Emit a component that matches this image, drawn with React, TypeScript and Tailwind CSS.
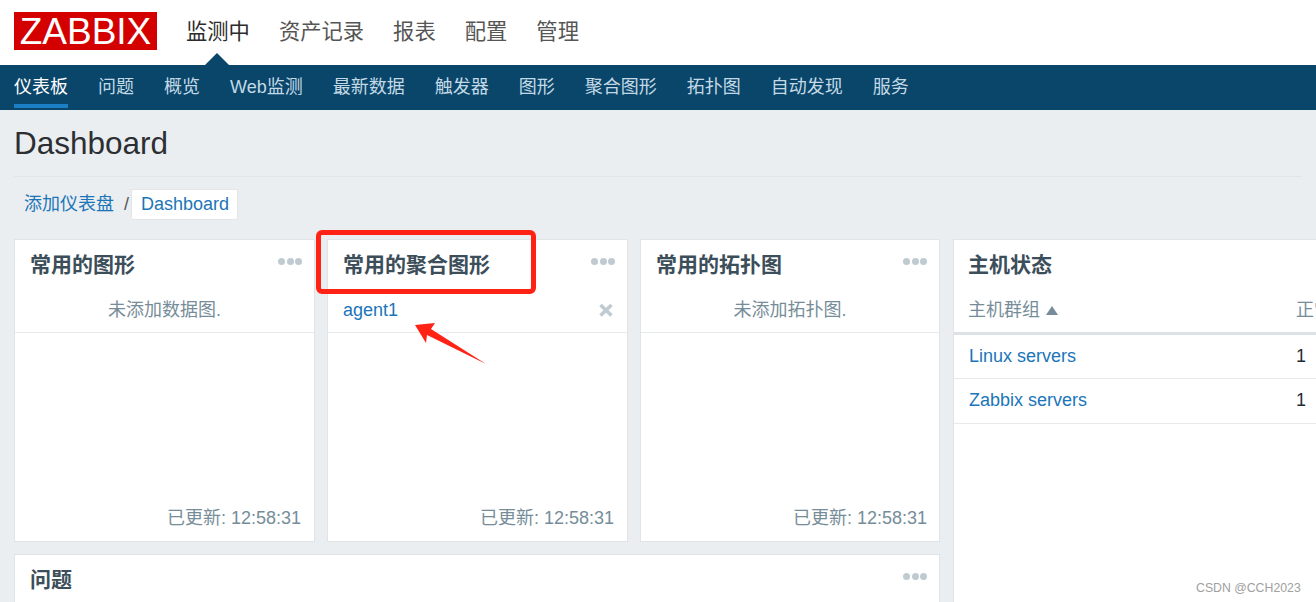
const FONT = "font-['Liberation_Sans','Noto_Sans_CJK_SC',sans-serif]";

function Dots() {
  return (
    <div className="flex gap-[1.5px] absolute right-[12px] top-[18px]">
      <span className="w-[7px] h-[7px] rounded-full bg-[#bfcbd1]" />
      <span className="w-[7px] h-[7px] rounded-full bg-[#bfcbd1]" />
      <span className="w-[7px] h-[7px] rounded-full bg-[#bfcbd1]" />
    </div>
  );
}

function Card({ title, children, narrow = false }: { title: string; children?: React.ReactNode; narrow?: boolean }) {
  return (
    <section className="relative bg-white border border-[#dfe4e7] flex flex-col h-[303px]">
      <h2 className="pl-[15px] pt-[10px] h-[49px] text-[21px] leading-[30px] font-bold text-[#3c4e5a]">{title}</h2>
      <Dots />
      <div className="flex-1">{children}</div>
      <div className={`text-right pb-[11px] text-[18px] leading-[24px] text-[#768d99] ${narrow ? "pr-[12px]" : "pr-[13px]"}`}>已更新: 12:58:31</div>
    </section>
  );
}

function EmptyRow({ text }: { text: string }) {
  return <div className="h-[44px] border-b border-[#e6eaec] text-center text-[18px] leading-[42px] text-[#768d99]">{text}</div>;
}

const mainNav = ["资产记录", "报表", "配置", "管理"];
const subNav = ["问题", "概览", "Web监测", "最新数据", "触发器", "图形", "聚合图形", "拓扑图", "自动发现", "服务"];

export default function App() {
  return (
    <div className={`relative w-[1316px] h-[602px] overflow-hidden bg-[#ebeef0] ${FONT}`}>
      <header className="h-[65px] bg-white flex pl-[14px] pt-[12px]">
        <div className="w-[143px] h-[38px] bg-[#d40000] text-white text-[37px] leading-[39px] text-center">ZABBIX</div>
        <nav className="flex gap-[29px] ml-[29px] text-[21.3px] leading-[41px] text-[#555]">
          <span className="relative text-[#2c2c2c] h-[41px]">
            监测中
            <span className="absolute left-[19px] top-[41px] w-0 h-0 border-x-[12px] border-x-transparent border-b-[12px] border-b-[#0a466a]" />
          </span>
          {mainNav.map((n) => <span key={n}>{n}</span>)}
        </nav>
      </header>

      <nav className="h-[45px] bg-[#0a466a] flex gap-[30px] pl-[14px] text-[18px] leading-[44px] text-[#c3dae6]">
        <span className="h-[43px] text-white border-b-[4px] border-[#1a7fc4]">仪表板</span>
        {subNav.map((n) => <span key={n}>{n}</span>)}
      </nav>

      <main className="px-[14px]">
        <h1 className="h-[67px] border-b border-[#e2e6e8] text-[31.5px] leading-[66px] text-[#2b2f33]">Dashboard</h1>
        <div className="flex items-center mt-[12px] h-[30px] text-[18px] text-[#1b75b9]">
          <span className="ml-[10px]">添加仪表盘</span>
          <span className="ml-[10px] mr-[2px] text-[#555]">/</span>
          <span className="h-[31px] leading-[28px] bg-white border border-[#e2e6e8] rounded-[2px] pl-[9px] pr-[8px]">Dashboard</span>
        </div>

        <div className="flex gap-[13px] mt-[20px] items-start">
          <div className="w-[926px] shrink-0 flex flex-col gap-[12px]">
            <div className="grid grid-cols-[301px_301px_300px] gap-x-[12px]">
              <Card title="常用的图形"><EmptyRow text="未添加数据图." /></Card>
              <Card title="常用的聚合图形">
                <div className="h-[44px] border-b border-[#e6eaec] flex items-center justify-between pl-[15px] pr-[14px] text-[18px] text-[#1b75b9]">
                  <span>agent1</span>
                  <svg className="mb-[1px]" width="14" height="14" viewBox="0 0 14 14" aria-hidden="true">
                    <path d="M1.5 2 12.5 12.5M12.5 2 1.5 12.5" stroke="#bfcbd1" strokeWidth="3.6" />
                  </svg>
                </div>
              </Card>
              <Card title="常用的拓扑图" narrow><EmptyRow text="未添加拓扑图." /></Card>
            </div>
            <section className="relative bg-white border border-[#dfe4e7] h-[100px]">
              <h2 className="pl-[15px] pt-[10px] text-[21px] leading-[30px] font-bold text-[#3c4e5a]">问题</h2>
              <Dots />
            </section>
          </div>

          <section className="w-[400px] shrink-0 relative bg-white border border-[#dfe4e7] h-[500px]">
            <h2 className="pl-[14px] pt-[10px] h-[49px] text-[21px] leading-[30px] font-bold text-[#3c4e5a]">主机状态</h2>
            <div className="grid grid-cols-[342px_1fr] text-[18px]">
              <div className="h-[46px] border-b-[3px] border-[#dbe1e5] pl-[14px] text-[#768d99] flex items-center pb-[1px]">
                主机群组
                <span className="ml-[6px] w-0 h-0 border-x-[6px] border-x-transparent border-b-[9px] border-b-[#768d99]" />
              </div>
              <div className="h-[46px] border-b-[3px] border-[#dbe1e5] leading-[42px] text-[#768d99]">正常</div>
              <div className="h-[44px] border-b border-[#e6eaec] pl-[15px] leading-[42px] text-[#1b75b9]">Linux servers</div>
              <div className="h-[44px] border-b border-[#e6eaec] leading-[42px] text-[#1f2c33]">1</div>
              <div className="h-[45px] border-b border-[#e6eaec] pl-[15px] leading-[42px] text-[#1b75b9]">Zabbix servers</div>
              <div className="h-[45px] border-b border-[#e6eaec] leading-[42px] text-[#1f2c33]">1</div>
            </div>
          </section>
        </div>
      </main>

      <div className="absolute left-[316px] top-[230px] w-[220px] h-[64px] border-[5px] border-[#ff2215] rounded-[6px]" />
      <svg className="absolute left-[410px] top-[318px]" width="80" height="50" viewBox="410 318 80 50" aria-hidden="true">
        <path d="M415 325 435 323 431 329 486 364 427 335 426 343Z" fill="#ff2215" />
      </svg>

      <div className="absolute left-[1196px] top-[580px] text-[12.3px] leading-[16px] text-[#a0a0a0] bg-white">CSDN @CCH2023</div>
    </div>
  );
}
